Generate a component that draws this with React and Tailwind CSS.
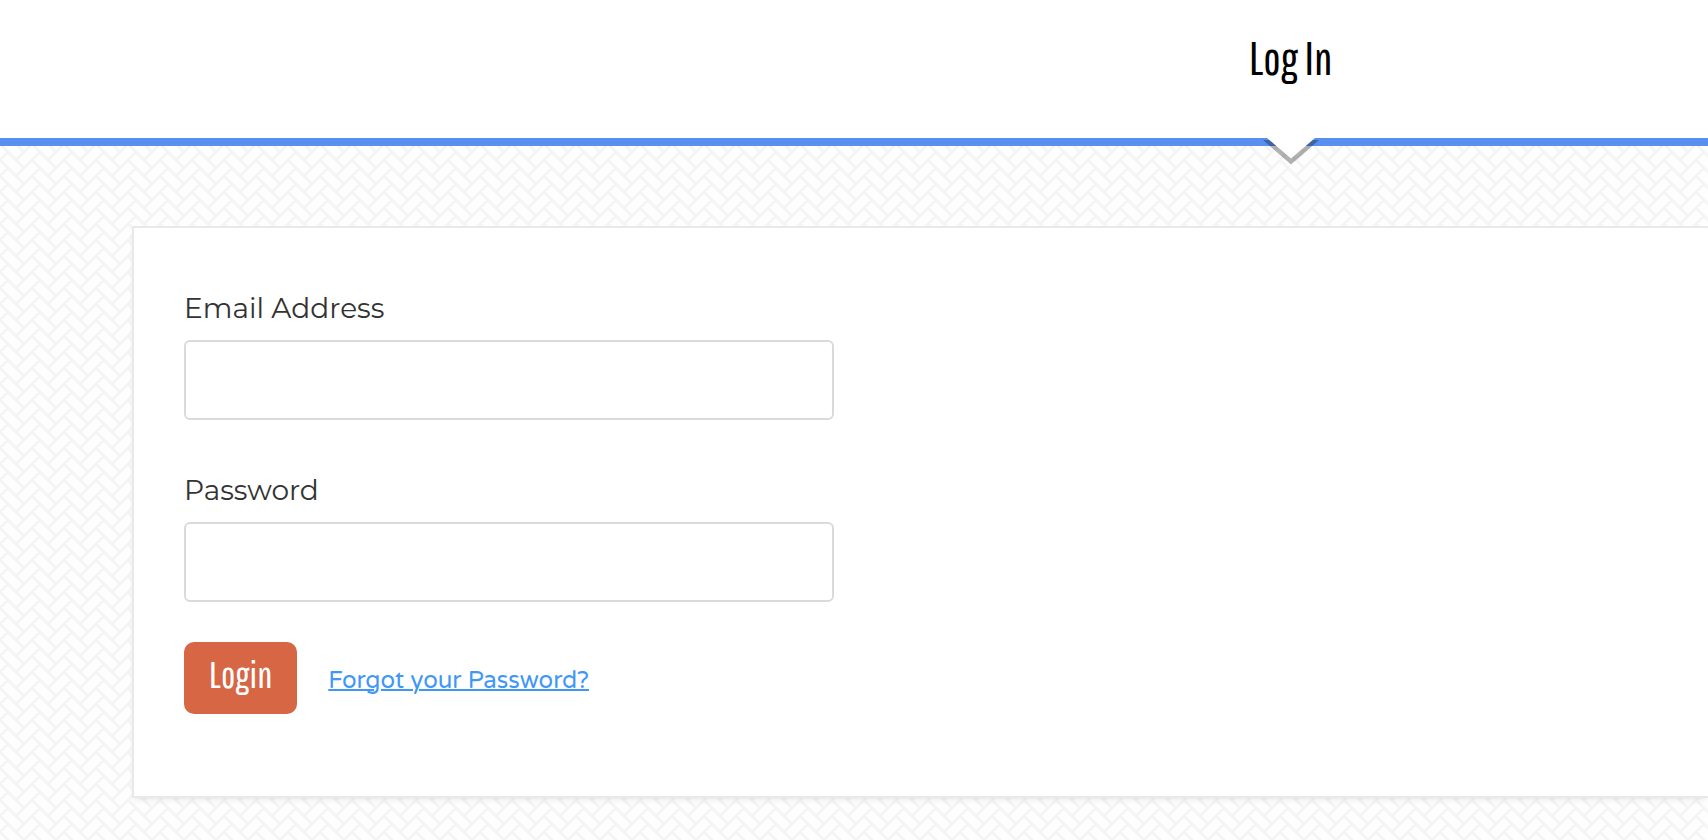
import { useState } from "react";

// Faint diagonal basket weave behind the whole page
function WeaveBackground() {
  return (
    <svg className="absolute inset-0 -z-10 h-full w-full" aria-hidden="true">
      <defs>
        <pattern id="weave" width="32" height="16" patternUnits="userSpaceOnUse">
          <rect width="32" height="16" fill="#fefefe" />
          <path
            d="M0 0L24 24M0 -16L24 8M-32 -16L-8 8M-32 0L-8 24M16 16L40 -8M16 32L40 8M-16 16L8 -8M-16 32L8 8M16 0L20 -4"
            stroke="#f5f5f5"
            strokeWidth="3"
            fill="none"
          />
        </pattern>
      </defs>
      <rect width="100%" height="100%" fill="url(#weave)" />
    </svg>
  );
}

function HeaderArrow() {
  return (
    <svg
      className="absolute top-full left-1/2 h-7 w-14 -translate-x-1/2"
      viewBox="0 0 56 28"
      aria-hidden="true"
    >
      <path d="M0 2H56L28 26.5Z" fill="#000" fillOpacity="0.3" />
      <path d="M4 0H52L28 20.5Z" fill="#fff" />
    </svg>
  );
}

function Field({ id, label, type, value, onChange }) {
  return (
    <div className="flex flex-col gap-4">
      <label htmlFor={id} className="font-[Montserrat,sans-serif] text-[28px] leading-8 text-[#333333]">
        {label}
      </label>
      <input
        id={id}
        type={type}
        value={value}
        onChange={(e) => onChange(e.target.value)}
        className="h-20 w-full rounded-md border-2 border-[#dadada] bg-white px-4 text-2xl outline-none"
      />
    </div>
  );
}

export default function App() {
  const [email, setEmail] = useState("");
  const [password, setPassword] = useState("");

  return (
    <div className="relative isolate min-h-screen overflow-x-clip">
      <WeaveBackground />

      <header className="border-b-8 border-[#598fef] bg-white">
        <div className="relative ml-[71%] w-39 pt-[34px] pb-14 text-center">
          <h1 className="font-['Pathway_Gothic_One',sans-serif] text-[46px] leading-[48px] font-normal text-black">
            Log In
          </h1>
          <HeaderArrow />
        </div>
      </header>

      <main className="pt-20 pb-10 pl-33">
        <form
          onSubmit={(e) => e.preventDefault()}
          className="border-2 border-r-0 border-[#e9e9e9] bg-white px-[50px] pt-16 pb-[82px] shadow-md shadow-black/5"
        >
          <div className="flex max-w-[650px] flex-col gap-[54px]">
            <Field id="email" label="Email Address" type="email" value={email} onChange={setEmail} />
            <Field id="password" label="Password" type="password" value={password} onChange={setPassword} />
          </div>

          <div className="mt-10 flex items-baseline gap-[31px]">
            <button
              type="submit"
              className="h-18 rounded-[10px] bg-[#d66644] px-[25px] pb-2 font-['Pathway_Gothic_One',sans-serif] text-[38px] leading-10 text-white"
            >
              Login
            </button>
            <a
              href="#forgot"
              className="font-['Varela_Round',sans-serif] text-2xl text-[#4097f7] underline decoration-2"
            >
              Forgot your Password?
            </a>
          </div>
        </form>
      </main>
    </div>
  );
}
